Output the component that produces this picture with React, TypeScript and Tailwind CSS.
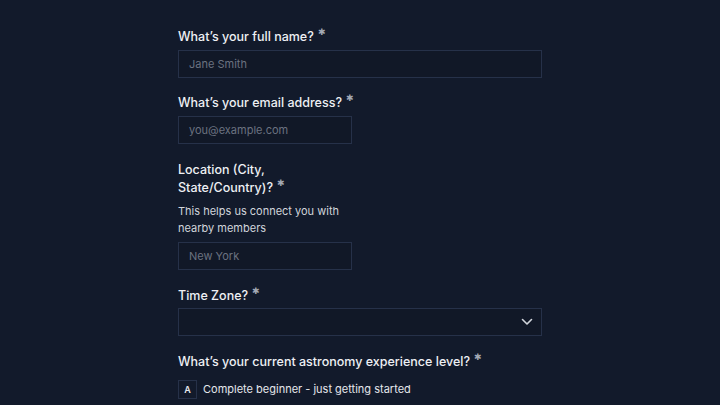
import React from "react";

function Star() {
  return (
    <span className="ml-[4px] inline-block align-top text-[9px] leading-none text-[#a3a9b5] relative top-[-1px]">✱</span>
  );
}

function Label({ children }: { children: React.ReactNode }) {
  return (
    <div className="text-[12.5px] leading-[18px] font-medium text-[#eef0f4]">
      {children}
      <Star />
    </div>
  );
}

export default function App() {
  return (
    <div
      className="min-h-[405px] w-full bg-[#121a2b] overflow-hidden"
      style={{ fontFamily: "Inter, 'Noto Sans', sans-serif" }}
    >
      <div className="ml-[178px] w-[364px] pt-[28px] flex flex-col">
        <Label>What’s your full name?</Label>
        <div className="mt-[4px] h-[28px] border border-[#263149] bg-[#111827] flex items-center px-[10px] text-[11px] text-[#6b7280]">
          Jane Smith
        </div>

        <div className="mt-[16px]">
          <Label>What’s your email address?</Label>
        </div>
        <div className="mt-[4px] w-[174px] h-[28px] border border-[#263149] bg-[#111827] flex items-center px-[10px] text-[11px] text-[#6b7280]">
          you@example.com
        </div>

        <div className="mt-[17px] w-[174px]">
          <Label>Location (City, State/Country)?</Label>
          <div className="mt-[6px] text-[11px] leading-[17px] text-[#d1d5db]">
            This helps us connect you with nearby members
          </div>
        </div>
        <div className="mt-[5px] w-[174px] h-[28px] border border-[#263149] bg-[#111827] flex items-center px-[10px] text-[11px] text-[#6b7280]">
          New York
        </div>

        <div className="mt-[17px]">
          <Label>Time Zone?</Label>
        </div>
        <div className="mt-[3px] h-[28px] border border-[#263149] bg-[#111827] flex items-center justify-end pr-[8px]">
          <svg width="12" height="8" viewBox="0 0 12 8" fill="none" stroke="#d1d5db" strokeWidth="1.6" strokeLinecap="round" strokeLinejoin="round">
            <path d="M1.5 1.5L6 6L10.5 1.5" />
          </svg>
        </div>

        <div className="mt-[17px]">
          <Label>What’s your current astronomy experience level?</Label>
        </div>
        <div className="mt-[9px] flex items-center gap-[6px]">
          <div className="w-[19px] h-[19px] border border-[#263149] flex items-center justify-center text-[9px] font-semibold text-[#e5e7eb]">
            A
          </div>
          <div className="text-[11px] text-[#e5e7eb]">Complete beginner - just getting started</div>
        </div>
      </div>
    </div>
  );
}
